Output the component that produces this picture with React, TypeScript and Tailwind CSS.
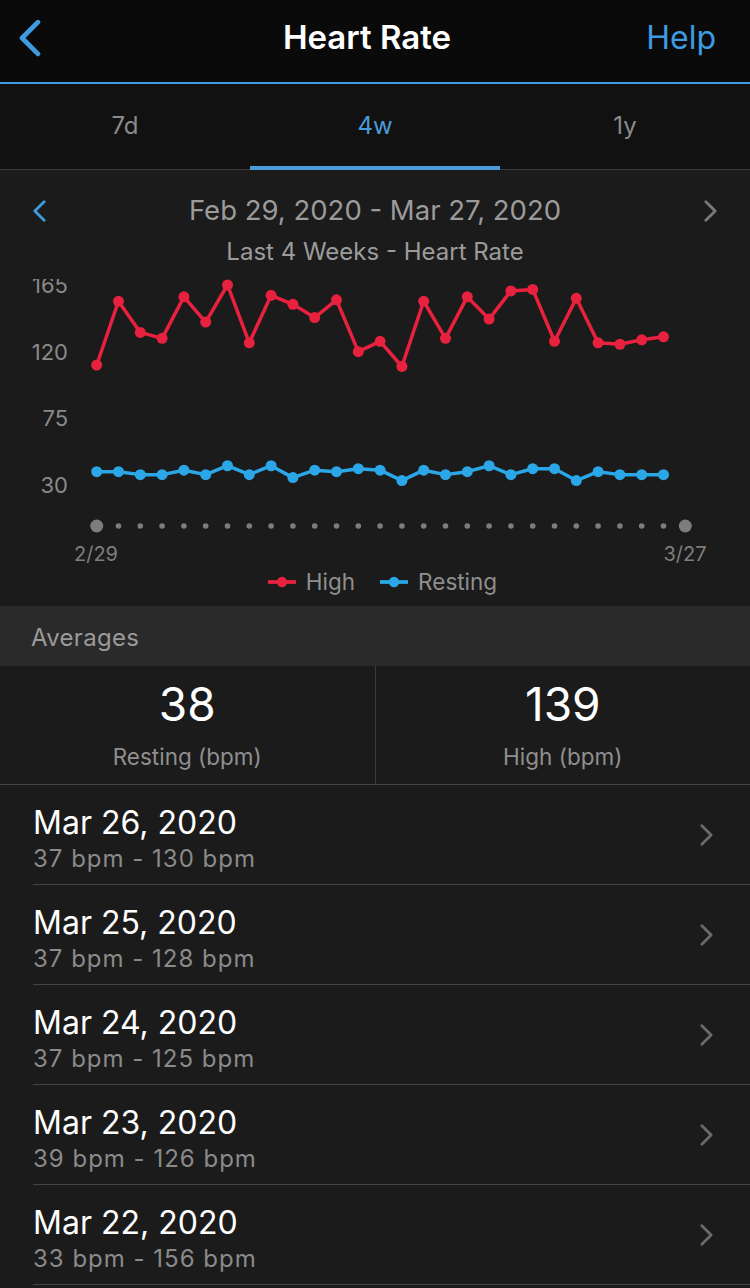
import React from "react";

const high = [111, 154, 133, 129, 157, 140, 165, 126, 158, 152, 143, 155, 120, 127, 110, 154, 129, 157, 142, 161, 162, 127, 156, 126, 125, 128, 130];
const resting = [39, 39, 37, 37, 40, 37, 43, 37, 43, 35, 40, 39, 41, 40, 33, 40, 37, 39, 43, 37, 41, 41, 33, 39, 37, 37, 37];

const days = [
  { date: "Mar 26, 2020", range: "37 bpm - 130 bpm" },
  { date: "Mar 25, 2020", range: "37 bpm - 128 bpm" },
  { date: "Mar 24, 2020", range: "37 bpm - 125 bpm" },
  { date: "Mar 23, 2020", range: "39 bpm - 126 bpm" },
  { date: "Mar 22, 2020", range: "33 bpm - 156 bpm" },
];

const xAt = (i: number) => 96.7 + i * 21.8;
const yAt = (v: number) => 285 + (165 - v) * 1.4815;

const Chevron = ({ dir, className }: { dir: "left" | "right"; className: string }) => (
  <svg viewBox="0 0 14 24" className={className} fill="none" stroke="currentColor" strokeWidth="3" strokeLinecap="round" strokeLinejoin="round">
    {dir === "left" ? <path d="M12 2 L2 12 L12 22" /> : <path d="M2 2 L12 12 L2 22" />}
  </svg>
);

const Series = ({ data, color }: { data: number[]; color: string }) => (
  <g>
    <polyline
      points={data.map((v, i) => `${xAt(i)},${yAt(v)}`).join(" ")}
      fill="none"
      stroke={color}
      strokeWidth="3.5"
      strokeLinejoin="round"
    />
    {data.map((v, i) => (
      <circle key={i} cx={xAt(i)} cy={yAt(v)} r="5.5" fill={color} />
    ))}
  </g>
);

const Chart = () => (
  <svg viewBox="0 279 750 287" className="block w-[750px] h-[287px]">
    {/* y axis labels */}
    {[165, 120, 75, 30].map((v) => (
      <text key={v} x="68" y={yAt(v) + 8} textAnchor="end" fontSize="22" fill="#8a8a8a" fontFamily="Inter, sans-serif">
        {v}
      </text>
    ))}
    <Series data={high} color="#e8213f" />
    <Series data={resting} color="#2ba6e6" />
    {/* day dots */}
    {Array.from({ length: 28 }).map((_, i) => (
      <circle key={i} cx={xAt(i)} cy="526" r={i === 0 || i === 27 ? 6.5 : 2.8} fill="#7d7d7d" />
    ))}
    <text x="96" y="561" textAnchor="middle" fontSize="20" fill="#7d7d7d" fontFamily="Inter, sans-serif">2/29</text>
    <text x="685" y="561" textAnchor="middle" fontSize="20" fill="#7d7d7d" fontFamily="Inter, sans-serif">3/27</text>
  </svg>
);

const LegendMark = ({ color }: { color: string }) => (
  <svg viewBox="0 0 32 12" className="w-[30px] h-[12px]">
    <line x1="1" y1="6" x2="31" y2="6" stroke={color} strokeWidth="4" />
    <circle cx="16" cy="6" r="5.5" fill={color} />
  </svg>
);

export default function App() {
  return (
    <div className="w-[750px] min-h-[1288px] bg-[#1b1b1b] font-['Inter',sans-serif] overflow-hidden">
      {/* Header */}
      <div className="h-[84px] bg-[#0a0a0a] border-b-2 border-[#3e9be0] flex items-center px-[18px] pb-[6px]">
        <div className="flex-1 flex">
          <Chevron dir="left" className="w-[24px] h-[38px] text-[#3e9be0]" />
        </div>
        <div className="text-white text-[33px] font-semibold">Heart Rate</div>
        <div className="flex-1 flex justify-end text-[#3e9be0] text-[32px] pr-[16px]">Help</div>
      </div>

      {/* Tabs */}
      <div className="h-[86px] bg-[#111111] border-b border-[#3c3c3c] flex relative">
        <div className="flex-1 flex items-center justify-center text-[24px] text-[#8a8a8a] pb-[2px]">7d</div>
        <div className="flex-1 flex items-center justify-center text-[24px] text-[#4b9bd8] pb-[2px] relative">
          4w
          <div className="absolute left-0 right-0 bottom-[-1px] h-[4px] bg-[#4b9bd8]" />
        </div>
        <div className="flex-1 flex items-center justify-center text-[24px] text-[#8a8a8a] pb-[2px]">1y</div>
      </div>

      {/* Chart section */}
      <div className="bg-[#1b1b1b] pt-[19px] pb-[8px]">
        <div className="h-[44px] flex items-center justify-between px-[33px]">
          <Chevron dir="left" className="w-[13px] h-[24px] text-[#3e9be0]" />
          <div className="text-[27.5px] text-[#9b9b9b]">Feb 29, 2020 - Mar 27, 2020</div>
          <Chevron dir="right" className="w-[13px] h-[24px] text-[#7a7a7a]" />
        </div>
        <div className="h-[38px] flex items-center justify-center text-[24px] text-[#9b9b9b]">
          Last 4 Weeks - Heart Rate
        </div>
        <div className="mt-[8px]">
          <Chart />
        </div>
        <div className="h-[32px] flex items-center justify-center gap-[9px] pl-[14px] text-[22.5px] text-[#8f8f8f]">
          <LegendMark color="#e8213f" />
          <span>High</span>
          <span className="w-[6px]" />
          <LegendMark color="#2ba6e6" />
          <span>Resting</span>
        </div>
      </div>

      {/* Averages */}
      <div className="h-[60px] bg-[#2a2a2a] flex items-center px-[31px] pt-[3px] text-[24px] tracking-[0.3px] text-[#9a9a9a]">Averages</div>
      <div className="flex bg-[#1b1b1b] border-b border-[#444444]">
        <div className="flex-1 flex flex-col items-center pt-[13px] pb-[13px] border-r border-[#3a3a3a]">
          <div className="text-white text-[46px] leading-[50px]">38</div>
          <div className="text-[#8f8f8f] text-[22.5px] leading-[28px] mt-[14px]">Resting (bpm)</div>
        </div>
        <div className="flex-1 flex flex-col items-center pt-[13px] pb-[13px]">
          <div className="text-white text-[46px] leading-[50px]">139</div>
          <div className="text-[#8f8f8f] text-[22.5px] leading-[28px] mt-[14px]">High (bpm)</div>
        </div>
      </div>

      {/* Daily list */}
      <div className="bg-[#1b1b1b]">
        {days.map((d) => (
          <div key={d.date} className="ml-[33px] h-[100px] border-b border-[#444444] flex items-center justify-between pr-[37px]">
            <div className="flex flex-col pt-[8px]">
              <div className="text-white text-[32px] leading-[38px]">{d.date}</div>
              <div className="text-[#8a8a8a] text-[24px] tracking-[1px] leading-[30px] mt-[2px]">{d.range}</div>
            </div>
            <Chevron dir="right" className="w-[13px] h-[24px] text-[#6a6a6a]" />
          </div>
        ))}
      </div>
    </div>
  );
}
